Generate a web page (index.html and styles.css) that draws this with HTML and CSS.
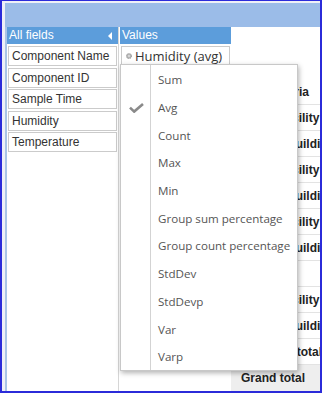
FILE: index.html
```html
<!DOCTYPE html>
<html>
<head>
<meta charset="utf-8">
<link rel="stylesheet" href="styles.css">
</head>
<body>
<div class="frame">
  <div class="topbar"></div>
  <div class="main">
    <div class="fields">
      <div class="bar"><span>All fields</span><span class="tri"></span></div>
      <div class="list">
        <div class="field">Component Name</div>
        <div class="field">Component ID</div>
        <div class="field">Sample Time</div>
        <div class="field">Humidity</div>
        <div class="field">Temperature</div>
      </div>
    </div>
    <div class="values">
      <div class="bar"><span>Values</span></div>
      <div class="chip">
        <svg class="gear" width="6" height="6" viewBox="0 0 6 6"><circle cx="3" cy="3" r="2.6" fill="#b4b4b4"/><circle cx="3" cy="3" r="2.6" fill="none" stroke="#8e8e8e" stroke-width="0.9" stroke-dasharray="1 0.9"/><circle cx="3" cy="3" r="0.9" fill="#e6e6e6"/></svg>
        <span>Humidity (avg)</span>
      </div>
      <div class="menu">
        <div class="item"><span class="chk"></span><span>Sum</span></div>
        <div class="item"><span class="chk"><svg width="15" height="10" viewBox="0 0 15 10"><path d="M1 4.6 L5.2 8.6 L14 1" fill="none" stroke="#8a8a8a" stroke-width="2.6"/></svg></span><span>Avg</span></div>
        <div class="item"><span class="chk"></span><span>Count</span></div>
        <div class="item"><span class="chk"></span><span>Max</span></div>
        <div class="item"><span class="chk"></span><span>Min</span></div>
        <div class="item"><span class="chk"></span><span>Group sum percentage</span></div>
        <div class="item"><span class="chk"></span><span>Group count percentage</span></div>
        <div class="item"><span class="chk"></span><span>StdDev</span></div>
        <div class="item"><span class="chk"></span><span>StdDevp</span></div>
        <div class="item"><span class="chk"></span><span>Var</span></div>
        <div class="item"><span class="chk"></span><span>Varp</span></div>
      </div>
    </div>
    <div class="grid">
      <div class="rowlabels">Row labels</div>
      <div class="table">
        <div class="row l0">Criteria</div>
        <div class="row l1">Facility</div>
        <div class="row l2">Building</div>
        <div class="row l1">Facility</div>
        <div class="row l2">Building</div>
        <div class="row l1">Facility</div>
        <div class="row l2">Building</div>
        <div class="row l1"></div>
        <div class="row l1">Facility</div>
        <div class="row l2">Building</div>
        <div class="row l3">Subtotal</div>
        <div class="row total">Grand total</div>
      </div>
    </div>
  </div>
</div>
</body>
</html>
```

FILE: styles.css
```css
* { box-sizing: border-box; }
html, body { margin: 0; padding: 0; }
body {
  width: 322px;
  height: 393px;
  overflow: hidden;
  background: #fff;
  font-family: "Liberation Sans", Arial, sans-serif;
}
.frame {
  width: 322px;
  height: 393px;
  border: 2px solid #2b2bd9;
  border-top-width: 1px;
  padding: 2px 0 0 3px;
  background: #eef0f7;
  display: flex;
  flex-direction: column;
  overflow: hidden;
}
.topbar {
  height: 24px;
  flex: none;
  background: #9bbce8;
}
.main {
  flex: 1;
  min-height: 0;
  display: flex;
  background: #fff;
}
.fields {
  width: 114px;
  flex: none;
  border-left: 2px solid #a9c4e7;
  border-right: 1px solid #d6d6d6;
}
.bar {
  height: 17px;
  background: #5c9ddb;
  color: #fff;
  font-size: 12px;
  line-height: 17px;
  padding-left: 2px;
  display: flex;
  align-items: center;
  justify-content: space-between;
}
.tri {
  width: 0;
  height: 0;
  border-top: 4px solid transparent;
  border-bottom: 4px solid transparent;
  border-right: 4px solid #fff;
  margin-right: 6px;
}
.list {
  padding: 2px 1px 0 1px;
  display: flex;
  flex-direction: column;
  gap: 1.6px;
}
.field {
  height: 20px;
  border: 1px solid #cbcbcb;
  font-size: 12px;
  line-height: 18px;
  padding-left: 3px;
  color: #333;
  white-space: nowrap;
}
.values {
  width: 112px;
  flex: none;
  padding-left: 1px;
  position: relative;
}
.chip {
  margin: 2px 1px 0 1px;
  height: 20px;
  border: 1px solid #cbcbcb;
  display: flex;
  align-items: center;
  padding-left: 4px;
  gap: 3px;
  font-family: "Open Sans", sans-serif;
  font-size: 13px;
  color: #333;
  white-space: nowrap;
  overflow: hidden;
}
.gear { flex: none; }
.menu {
  position: absolute;
  left: 1px;
  top: 37px;
  width: 178px;
  height: 307px;
  border: 1px solid #c8c8c8;
  padding-top: 1px;
  background: linear-gradient(to right, transparent 29px, #d3d3d3 29px, #d3d3d3 30px, transparent 30px), #fff;
  box-shadow: 1px 2px 5px rgba(0, 0, 0, 0.3);
  font-family: "Open Sans", sans-serif;
  font-size: 11.6px;
  color: #555;
  z-index: 2;
}
.item {
  height: 27.7px;
  display: flex;
  align-items: center;
  white-space: nowrap;
}
.chk {
  width: 29px;
  flex: none;
  display: flex;
  justify-content: center;
  padding-left: 1px;
}
.item > span + span { margin-left: 8px; }
.grid {
  flex: 1;
  min-width: 0;
  overflow: hidden;
}
.rowlabels {
  padding: 47px 0 0 9px;
  line-height: 13px;
  font-family: "Open Sans", sans-serif;
  font-size: 11.5px;
  color: #333;
  white-space: nowrap;
}
.table {
  margin-top: -8px;
  width: 200px;
}
.row {
  height: 26px;
  padding-top: 7px;
  border-bottom: 1px solid #e3e3e3;
  font-weight: bold;
  font-size: 12px;
  line-height: 12px;
  color: #222;
  white-space: nowrap;
}
.l0 { padding-left: 36px; }
.l1 { padding-left: 47px; }
.l2 { padding-left: 56px; }
.l3 { padding-left: 43px; }
.total {
  padding-left: 10px;
  background: #eeeeee;
  border-bottom: none;
}
```
